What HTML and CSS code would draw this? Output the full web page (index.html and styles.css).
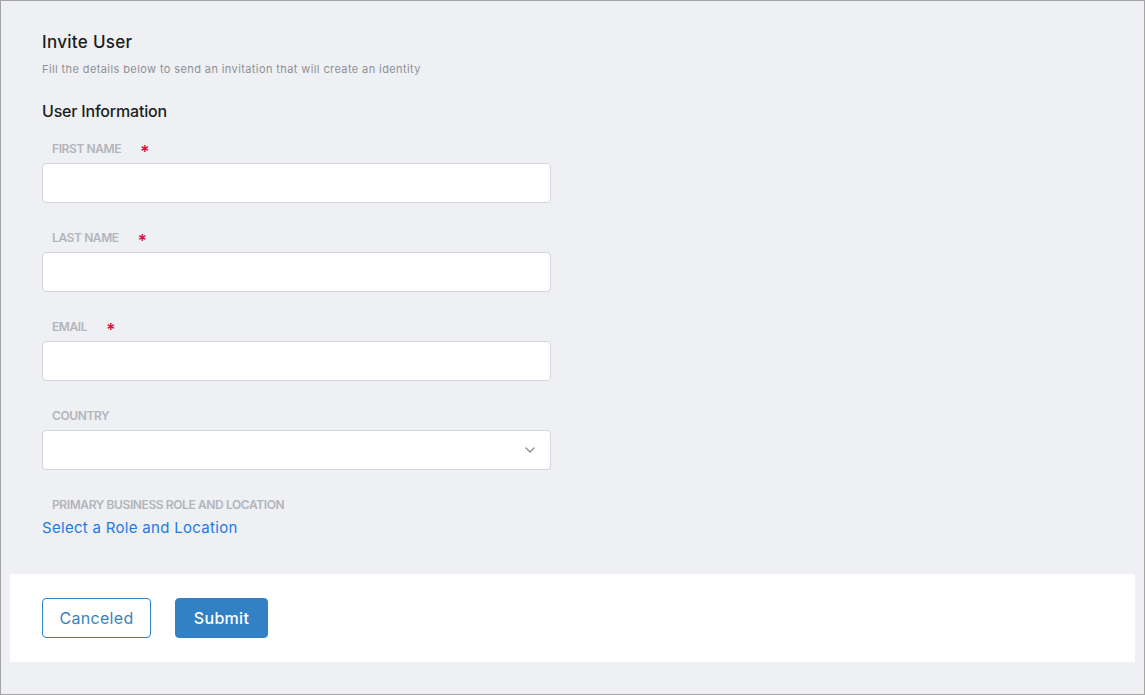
FILE: index.html
```html
<!DOCTYPE html>
<html>
<head>
<meta charset="utf-8">
<link rel="stylesheet" href="styles.css">
</head>
<body>
<div class="page">
  <div class="form">
    <h1 class="title">Invite User</h1>
    <p class="subtitle">Fill the details below to send an invitation that will create an identity</p>
    <h2 class="section">User Information</h2>

    <div class="field">
      <label class="label">FIRST NAME<span class="req">*</span></label>
      <div class="input"></div>
    </div>
    <div class="field">
      <label class="label">LAST NAME<span class="req">*</span></label>
      <div class="input"></div>
    </div>
    <div class="field">
      <label class="label">EMAIL<span class="req">*</span></label>
      <div class="input"></div>
    </div>
    <div class="field">
      <label class="label">COUNTRY</label>
      <div class="input select">
        <svg class="chev" width="10" height="6" viewBox="0 0 10 6"><path d="M1 1l4 4 4-4" fill="none" stroke="#8a8d93" stroke-width="1.3" stroke-linecap="round" stroke-linejoin="round"/></svg>
      </div>
    </div>
    <div class="field last">
      <label class="label">PRIMARY BUSINESS ROLE AND LOCATION</label>
      <a class="link">Select a Role and Location</a>
    </div>
  </div>
  <div class="footer">
    <button class="btn btn-outline">Canceled</button>
    <button class="btn btn-primary">Submit</button>
  </div>
</div>
</body>
</html>
```

FILE: styles.css
```css
* { box-sizing: border-box; }
html, body { margin: 0; padding: 0; }
body { font-family: Inter, Roboto, "Liberation Sans", sans-serif; }
.page {
  width: 1145px;
  height: 695px;
  border: 1px solid #a4a4a4;
  background: #eef0f3;
  overflow: hidden;
}
.form { padding: 29px 0 0 41px; }
.title {
  margin: 0;
  font-size: 17px;
  line-height: 24px;
  font-weight: 500;
  color: #1b1d21;
  letter-spacing: 0.3px;
}
.subtitle {
  margin: 7px 0 0;
  font-size: 11px;
  line-height: 16px;
  color: #8c9098;
  letter-spacing: 0.4px;
}
.section {
  margin: 23px 0 0;
  font-size: 16px;
  line-height: 22px;
  font-weight: 500;
  color: #1b1d21;
  letter-spacing: -0.2px;
}
.field { margin-top: 19px; width: 509px; }
.field + .field { margin-top: 27px; }
.label {
  display: block;
  height: 16px;
  padding-left: 10px;
  font-size: 12px;
  line-height: 16px;
  font-weight: 600;
  color: #b2b5ba;
  letter-spacing: -0.4px;
}
.req {
  color: #d8123f;
  margin-left: 19px;
  font-size: 17px;
  line-height: 0;
  font-weight: 600;
  position: relative;
  top: 5px;
}
.input {
  margin-top: 6px;
  height: 40px;
  background: #fff;
  border: 1px solid #d3d4d9;
  border-radius: 4px;
}
.select {
  display: flex;
  align-items: center;
  justify-content: flex-end;
  padding-right: 15px;
}
.chev { display: block; }
.link {
  display: block;
  margin-top: 5px;
  font-size: 15px;
  line-height: 20px;
  color: #1f7ae0;
  letter-spacing: 0.3px;
  cursor: pointer;
}
.footer {
  margin: 36px 9px 0;
  height: 88px;
  background: #fff;
  display: flex;
  align-items: center;
  padding-left: 32px;
  gap: 24px;
}
.btn {
  height: 40px;
  border-radius: 4px;
  font-family: inherit;
  font-size: 16px;
  cursor: pointer;
}
.btn-outline {
  width: 109px;
  background: #fff;
  border: 1px solid #3482c5;
  color: #3a7fc0;
  letter-spacing: 0.3px;
}
.btn-primary {
  width: 93px;
  background: #3181c4;
  border: 1px solid #3181c4;
  color: #fff;
  font-weight: 500;
  letter-spacing: 0.3px;
}
```
